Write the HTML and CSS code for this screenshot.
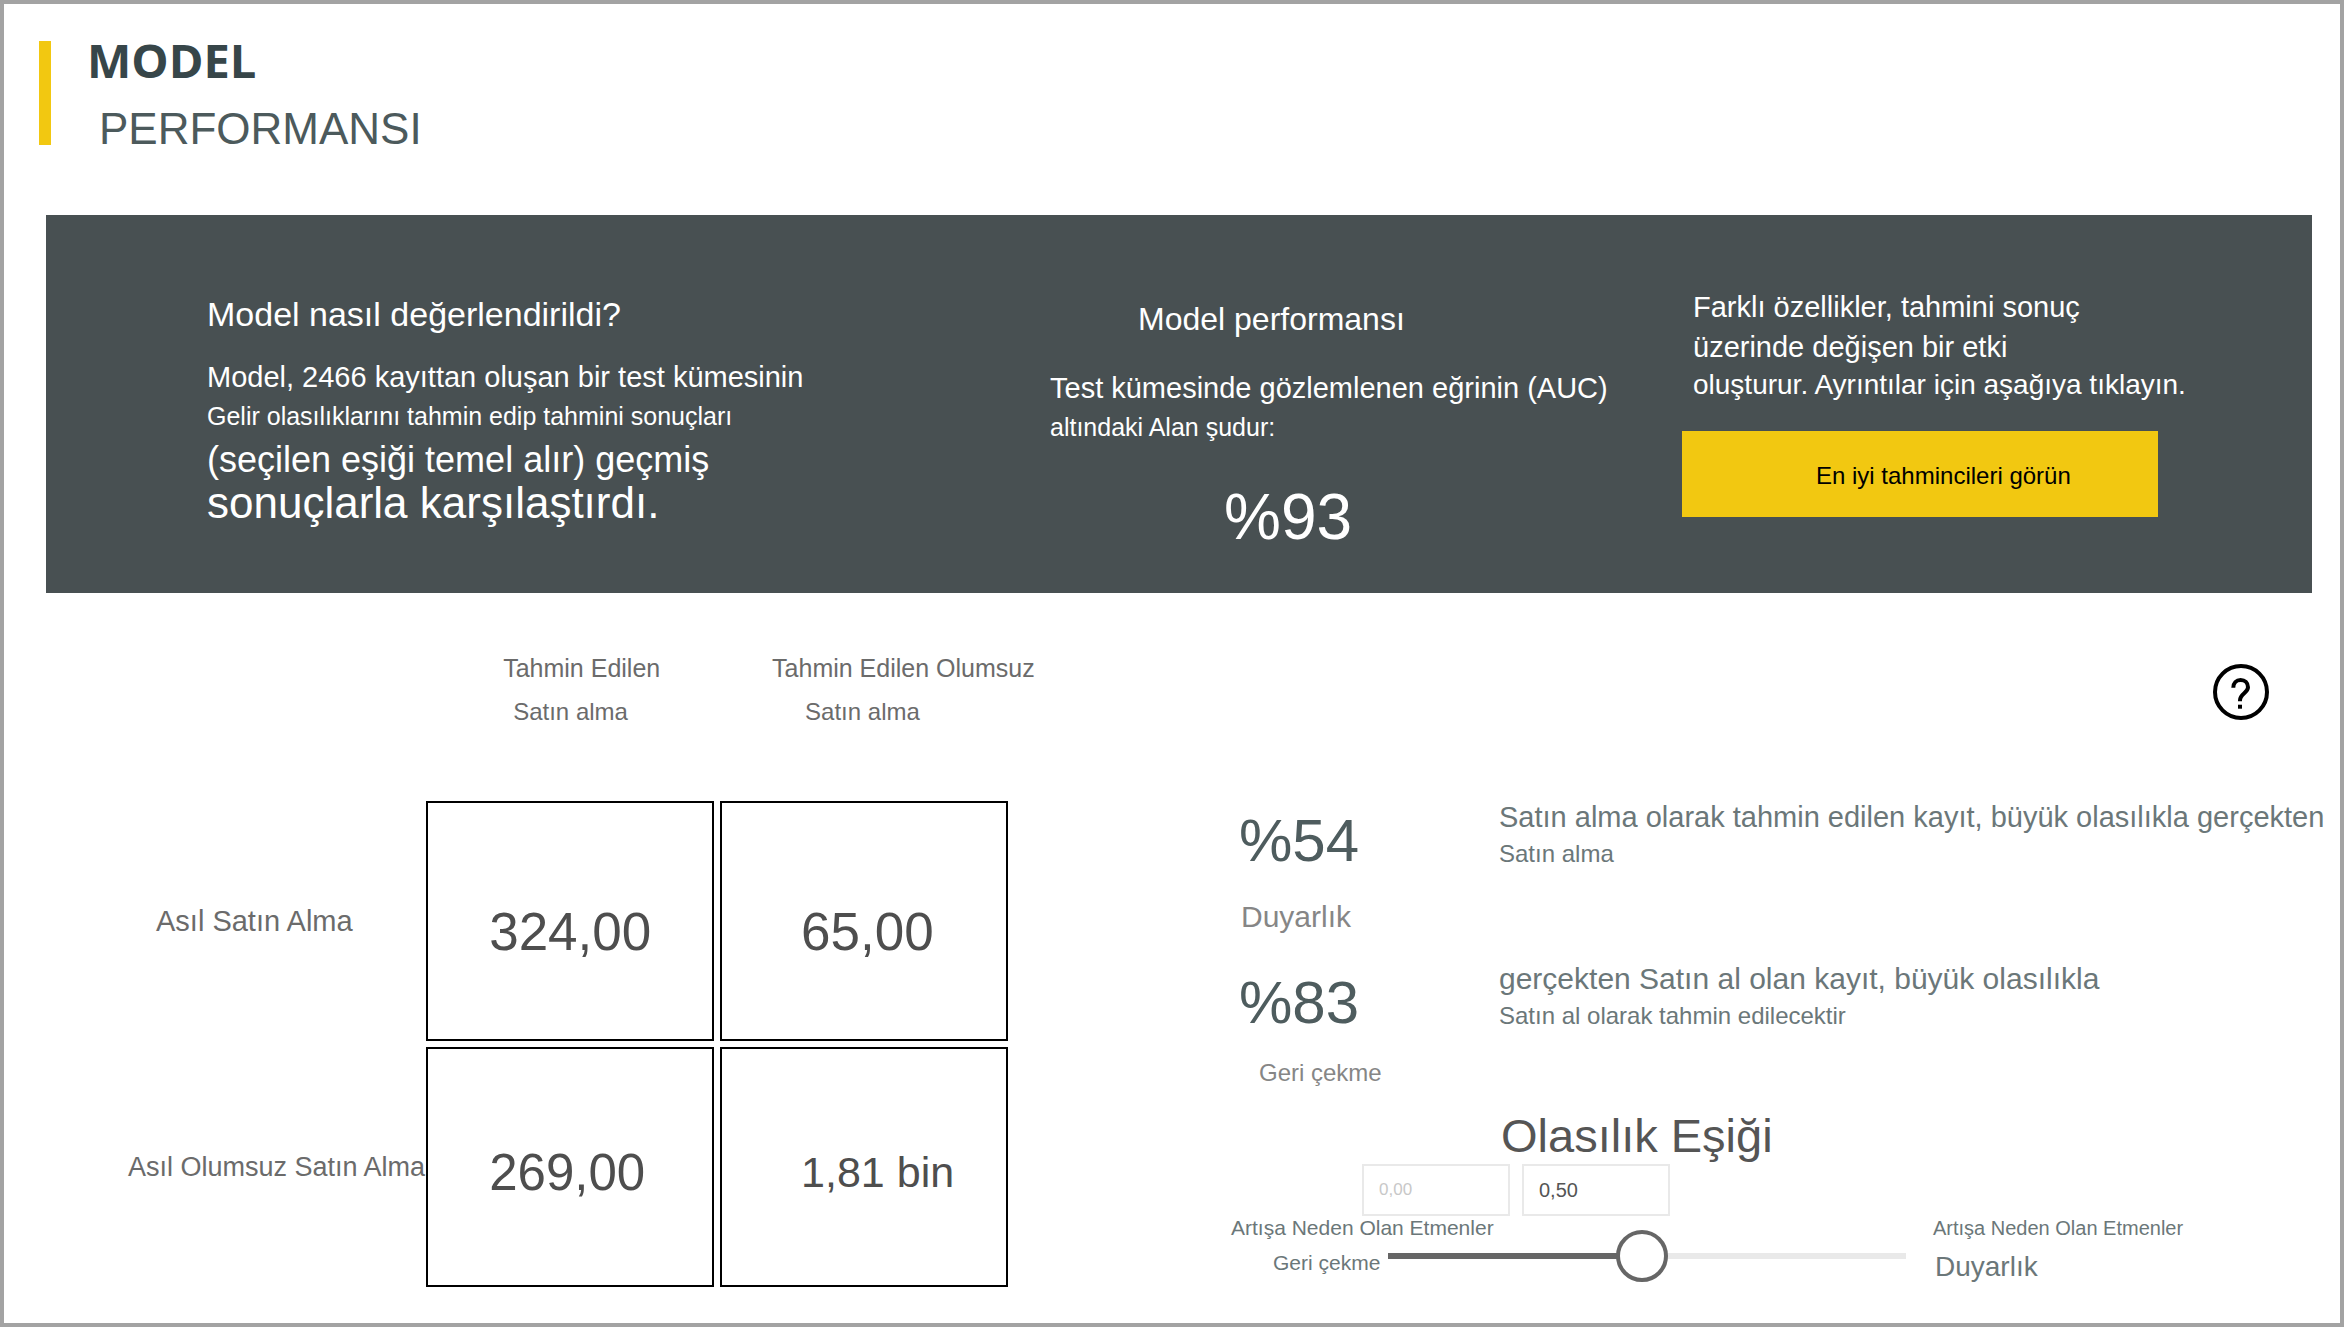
FILE: index.html
```html
<!DOCTYPE html>
<html lang="tr">
<head>
  <meta charset="utf-8">
  <meta name="viewport" content="width=device-width, initial-scale=1">
  <title>Model performansı</title>
  <link rel="stylesheet" href="styles.css">
</head>
<body>
  <div class="page">
    <header class="page-header">
      <span class="accent"></span>
      <h1 class="title">
        <span class="title-main">MODEL</span>
        <span class="title-sub">PERFORMANSI</span>
      </h1>
    </header>

    <section class="banner">
      <div class="evaluation">
        <h2 class="banner-title">Model nasıl değerlendirildi?</h2>
        <p class="text-lead">Model, 2466 kayıttan oluşan bir test kümesinin</p>
        <p class="text-note">Gelir olasılıklarını tahmin edip tahmini sonuçları</p>
        <p class="text-large">(seçilen eşiği temel alır) geçmiş</p>
        <p class="text-xlarge">sonuçlarla karşılaştırdı.</p>
      </div>
      <div class="performance">
        <h2 class="banner-subtitle">Model performansı</h2>
        <p class="text-lead">Test kümesinde gözlemlenen eğrinin (AUC)</p>
        <p class="text-note">altındaki Alan şudur:</p>
        <p class="score">%93</p>
      </div>
      <div class="predictors">
        <p class="text-lead">Farklı özellikler, tahmini sonuç</p>
        <p class="text-lead">üzerinde değişen bir etki</p>
        <p class="text-hint">oluşturur. Ayrıntılar için aşağıya tıklayın.</p>
        <button class="predictors-button" type="button">En iyi tahmincileri görün</button>
      </div>
    </section>

    <main class="details">
      <table class="matrix">
        <thead>
          <tr>
            <td class="matrix-corner"></td>
            <th class="head-positive" scope="col">Tahmin Edilen <span>Satın alma</span></th>
            <th class="head-negative" scope="col">Tahmin Edilen Olumsuz <span>Satın alma</span></th>
          </tr>
        </thead>
        <tbody>
          <tr class="row-positive">
            <th scope="row">Asıl Satın Alma</th>
            <td class="count">324,00</td>
            <td class="count count-right">65,00</td>
          </tr>
          <tr class="row-negative">
            <th scope="row">Asıl Olumsuz Satın Alma</th>
            <td class="count">269,00</td>
            <td class="count count-right count-short">1,81 bin</td>
          </tr>
        </tbody>
      </table>

      <section class="metrics">
        <button class="help" type="button" aria-label="?">
          <svg viewBox="0 0 56 56" fill="none" stroke="currentColor" stroke-width="4">
            <circle cx="28" cy="28" r="26"/>
            <path d="M20.300 23.700c0-4.600 3-7.700 7.300-7.700s7.400 3 7.400 7.200c0 5.600-8 6.600-8 13v1.100"/>
            <path d="M27 40.700v4"/>
          </svg>
        </button>

        <div class="metric">
          <div class="metric-value">
            <p class="percent">%54</p>
            <p class="metric-name">Duyarlık</p>
          </div>
          <div class="metric-text">
            <p class="text-lead">Satın alma olarak tahmin edilen kayıt, büyük olasılıkla gerçekten</p>
            <p class="text-small">Satın alma</p>
          </div>
        </div>
        <div class="metric">
          <div class="metric-value">
            <p class="percent">%83</p>
            <p class="metric-name metric-name-small">Geri çekme</p>
          </div>
          <div class="metric-text">
            <p class="text-lead text-lead-wide">gerçekten Satın al olan kayıt, büyük olasılıkla</p>
            <p class="text-small">Satın al olarak tahmin edilecektir</p>
          </div>
        </div>

        <label class="threshold-title" id="threshold-title" for="threshold-value">Olasılık Eşiği</label>
        <div class="threshold-inputs">
          <input class="threshold-min" type="text" value="0,00" disabled aria-labelledby="threshold-title">
          <input id="threshold-value" type="text" value="0,50">
        </div>
        <div class="threshold-slider">
          <div class="end-left">
            <p class="end-title">Artışa Neden Olan Etmenler</p>
            <p class="end-name">Geri çekme</p>
          </div>
          <input type="range" min="0" max="1" step="0.01" value="0.49" aria-labelledby="threshold-title">
          <div class="end-right">
            <p class="end-title">Artışa Neden Olan Etmenler</p>
            <p class="end-name">Duyarlık</p>
          </div>
        </div>
      </section>
    </main>
  </div>
</body>
</html>
```

FILE: styles.css
```css
* {
  box-sizing: border-box;
}

body {
  margin: 0;
  background: #fff;
  color: #6b6b6b;
  font-family: "Liberation Sans", Arial, sans-serif;
}

h1,
h2,
p {
  margin: 0;
  font-weight: 400;
  white-space: nowrap;
}

button,
input {
  margin: 0;
  font-family: inherit;
}

.page {
  min-height: 100vh;
  border: 4px solid #a3a3a3;
}

/* Header */
.page-header {
  display: flex;
  align-items: flex-start;
  gap: 36px;
  padding: 37px 35px 0;
}

.accent {
  width: 12px;
  height: 104px;
  background: #f2c811;
}

.title-main,
.title-sub {
  display: block;
}

.title-main {
  color: #374649;
  font: 700 47px/38px "Open Sans", "Noto Sans", sans-serif;
}

.title-sub {
  margin-top: 28px;
  padding-left: 12px;
  color: #4c5a5c;
  font-size: 44px;
  line-height: 44px;
}

/* Shared text sizes */
.text-lead {
  font-size: 29px;
  line-height: 40px;
}

.text-lead-wide {
  font-size: 30px;
}

.text-note {
  font-size: 25px;
  line-height: 38px;
}

.text-large {
  font-size: 36px;
  line-height: 50px;
}

.text-xlarge {
  font-size: 44px;
  line-height: 36px;
}

.text-hint {
  font-size: 28px;
  line-height: 36px;
}

.text-small {
  font-size: 24px;
  line-height: 34px;
}

/* Banner */
.banner {
  display: grid;
  grid-template-columns: minmax(0, 843fr) minmax(0, 632fr) minmax(0, 630fr);
  margin: 64px 28px 0 42px;
  padding: 0 0 40px 161px;
  background: #485052;
  color: #fff;
}

.evaluation {
  padding-top: 79px;
}

.performance {
  padding-top: 84px;
}

.predictors {
  padding-top: 72px;
}

.banner-title {
  margin-bottom: 23px;
  font-size: 34px;
  line-height: 40px;
}

.banner-subtitle {
  margin-bottom: 29px;
  padding-left: 88px;
  font-size: 32px;
  line-height: 40px;
}

.score {
  margin-top: 35px;
  padding-left: 174px;
  font-size: 64px;
  line-height: 72px;
}

.predictors p {
  padding-left: 11px;
}

.predictors-button {
  width: 476px;
  max-width: 100%;
  height: 86px;
  margin-top: 28px;
  padding: 4px 0 0 134px;
  border: 0;
  background: #f2c811;
  color: #000;
  font-size: 24px;
  text-align: left;
}

/* Lower half */
.details {
  display: grid;
  grid-template-columns: minmax(0, 1010fr) minmax(0, 1326fr);
  align-items: start;
}

/* Confusion matrix */
.matrix {
  width: 100%;
  margin: 47px 0 24px;
  border-spacing: 6px;
  table-layout: fixed;
}

.matrix th,
.matrix td {
  padding: 0;
  font-weight: 400;
  text-align: left;
  white-space: nowrap;
}

.matrix-corner {
  width: 41.6%;
}

.matrix thead th {
  height: 149px;
  font-size: 25px;
  line-height: 44px;
  vertical-align: top;
}

.matrix thead span {
  display: block;
  font-size: 24px;
}

.matrix .head-positive {
  padding-left: 77px;
}

.head-positive span {
  padding-left: 10px;
}

.matrix .head-negative {
  padding-left: 52px;
}

.head-negative span {
  padding-left: 33px;
}

.matrix .row-positive th {
  padding-left: 146px;
  font-size: 29px;
}

.matrix .row-negative th {
  padding-left: 118px;
  font-size: 27px;
}

.matrix .count {
  height: 240px;
  padding: 20px 0 0 61px;
  border: 2px solid #000;
  color: #4e4e4e;
  font-size: 53px;
}

.matrix .row-negative .count {
  padding-top: 10px;
  font-size: 51px;
}

.matrix .count-right {
  padding-left: 79px;
}

.matrix .row-negative .count-short {
  font-size: 43px;
}

/* Metrics */
.metrics {
  padding: 71px 0 0 217px;
}

.help {
  display: block;
  width: 56px;
  height: 56px;
  margin: 0 71px 77px auto;
  padding: 0;
  border: 0;
  background: none;
  color: #000;
}

.help svg {
  display: block;
}

.metric {
  display: grid;
  grid-template-columns: 260px minmax(0, 1fr);
  margin-bottom: 22px;
  padding-left: 8px;
}

.metric-value {
  padding-top: 12px;
}

.percent {
  color: #4e5c5e;
  font-size: 60px;
  line-height: 64px;
}

.metric-name {
  margin-top: 24px;
  padding-left: 2px;
  color: #868686;
  font-size: 30px;
  line-height: 40px;
}

.metric-name-small {
  margin-top: 18px;
  padding-left: 20px;
  font-size: 24px;
}

.metric-text,
.end-left,
.end-right {
  color: #6b7779;
}

/* Probability threshold */
.threshold-title {
  display: block;
  margin-top: -7px;
  padding-left: 270px;
  color: #555;
  font-size: 47px;
  line-height: 56px;
}

.threshold-inputs {
  display: flex;
  gap: 12px;
  padding-left: 131px;
}

.threshold-inputs input {
  width: 148px;
  height: 52px;
  padding: 0 15px;
  border: 2px solid #e9e9e9;
  border-radius: 0;
  background: #fff;
  color: #555;
  font-size: 20px;
}

.threshold-inputs .threshold-min {
  color: #c8c8c8;
  font-size: 17px;
}

.threshold-slider {
  display: grid;
  grid-template-columns: 157px minmax(0, 518px) auto;
  justify-content: start;
  align-items: start;
}

.end-title {
  font-size: 21px;
  line-height: 24px;
}

.end-name {
  padding-left: 42px;
  font-size: 21px;
  line-height: 46px;
}

.end-right {
  padding-left: 27px;
}

.end-right .end-title {
  font-size: 20px;
}

.end-right .end-name {
  padding-left: 2px;
  font-size: 28px;
  line-height: 54px;
}

.threshold-slider input {
  width: 100%;
  height: 52px;
  margin-top: 14px;
  appearance: none;
  background: linear-gradient(to right, #666 49%, #e9e9e9 49%) center / 100% 6px no-repeat;
}

.threshold-slider input::-webkit-slider-thumb {
  width: 52px;
  height: 52px;
  appearance: none;
  border: 4px solid #666;
  border-radius: 50%;
  background: #fff;
}
```
